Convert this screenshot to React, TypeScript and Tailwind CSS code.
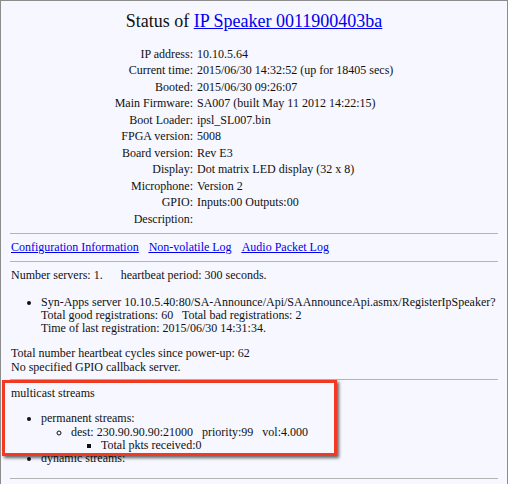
const rows: [string, string][] = [
  ['IP address:', '10.10.5.64'],
  ['Current time:', '2015/06/30 14:32:52 (up for 18405 secs)'],
  ['Booted:', '2015/06/30 09:26:07'],
  ['Main Firmware:', 'SA007 (built May 11 2012 14:22:15)'],
  ['Boot Loader:', 'ipsl_SL007.bin'],
  ['FPGA version:', '5008'],
  ['Board version:', 'Rev E3'],
  ['Display:', 'Dot matrix LED display (32 x 8)'],
  ['Microphone:', 'Version 2'],
  ['GPIO:', 'Inputs:00 Outputs:00'],
  ['Description:', ''],
]

function Rule() {
  return <div className="mx-[9px] border-t border-[#b4b4b4]" />
}

export default function App() {
  return (
    <div
      className="relative h-[484px] w-[508px] overflow-hidden border-x border-t border-[#8c8c8c] bg-[#f6f7ff] text-[12px] leading-[13.3px] text-[#111]"
      style={{ fontFamily: '"Liberation Serif", "Times New Roman", serif' }}
    >
      <h2 className="mt-[10px] text-center text-[18px] leading-[20px]">
        Status of <a className="text-[#0000ee] underline">IP Speaker 0011900403ba</a>
      </h2>

      <div className="mx-auto mt-[15px] grid w-fit grid-cols-[auto_auto] gap-x-[4px] leading-[16.45px]">
        {rows.map(([label, value]) => (
          <div key={label} className="contents">
            <div className="text-right">{label}</div>
            <div>{value}</div>
          </div>
        ))}
      </div>

      <div className="mt-[6px]">
        <Rule />
      </div>

      <div className="mx-[10px] mt-[7px] flex gap-[10px] text-[#0000ee] underline">
        <a>Configuration Information</a>
        <a>Non-volatile Log</a>
        <a>Audio Packet Log</a>
      </div>

      <div className="mt-[7px]">
        <Rule />
      </div>

      <div className="mx-[10px] mt-[7px]">
        <p className="whitespace-pre">Number servers: 1.      heartbeat period: 300 seconds.</p>
        <ul className="mb-[12px] mt-[13px] list-disc pl-[30px]">
          <li>
            Syn-Apps server 10.10.5.40:80/SA-Announce/Api/SAAnnounceApi.asmx/RegisterIpSpeaker?
            <br />
            <span className="whitespace-pre">Total good registrations: 60   Total bad registrations: 2</span>
            <br />
            Time of last registration: 2015/06/30 14:31:34.
          </li>
        </ul>
        <p>Total number heartbeat cycles since power-up: 62</p>
        <p>No specified GPIO callback server.</p>
      </div>

      <div className="mt-[5px]">
        <Rule />
      </div>

      <div className="mx-[10px] mt-[7px]">
        <p>multicast streams</p>
        <ul className="my-[12px] list-disc pl-[30px]">
          <li>
            permanent streams:
            <ul className="list-[circle] pl-[30px]">
              <li className="whitespace-pre">
                dest: 230.90.90.90:21000   priority:99   vol:4.000
                <ul className="list-[square] whitespace-normal pl-[30px]">
                  <li>Total pkts received:0</li>
                </ul>
              </li>
            </ul>
          </li>
          <li>dynamic streams:</li>
        </ul>
      </div>

      <Rule />

      <div className="absolute left-[1px] top-[379px] h-[76px] w-[335px] border-[3px] border-[#f23a22] shadow-[2px_2px_3px_rgba(0,0,0,0.6)]" />
    </div>
  )
}
